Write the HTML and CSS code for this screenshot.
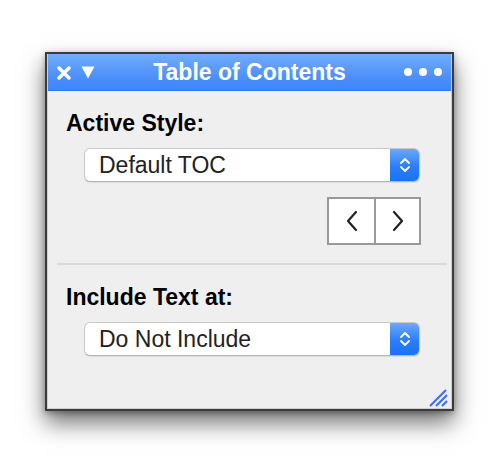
FILE: index.html
```html
<!DOCTYPE html>
<html lang="en">
<head>
  <meta charset="UTF-8">
  <title>Table of Contents</title>
  <link rel="stylesheet" href="styles.css">
</head>
<body>
  <div class="window">
    <div class="window-inner">
      <div class="titlebar">
        <div class="title-left">
          <svg class="close-icon" width="14" height="14" viewBox="0 0 14 14">
            <path d="M2 2 L12 12 M12 2 L2 12" stroke="#fff" stroke-width="3.4" stroke-linecap="round"/>
          </svg>
          <svg class="menu-icon" width="14" height="13" viewBox="0 0 14 13">
            <path d="M0.5 0.5 H13.5 L7 12.5 Z" fill="#fff"/>
          </svg>
        </div>
        <div class="title">Table of Contents</div>
        <div class="title-right">
          <span class="dot"></span><span class="dot"></span><span class="dot"></span>
        </div>
      </div>

      <div class="content">
        <div class="label">Active Style:</div>
        <div class="select">
          <span class="select-value">Default TOC</span>
          <span class="stepper">
            <svg width="12" height="18" viewBox="0 0 12 18">
              <path d="M2 7 L6 3 L10 7 M2 11 L6 15 L10 11" fill="none" stroke="#fff" stroke-width="1.8" stroke-linecap="round" stroke-linejoin="round"/>
            </svg>
          </span>
        </div>

        <div class="nav">
          <button class="nav-btn">
            <svg width="14" height="22" viewBox="0 0 14 22">
              <path d="M11 2 L3 11 L11 20" fill="none" stroke="#222" stroke-width="2.2" stroke-linecap="round" stroke-linejoin="round"/>
            </svg>
          </button>
          <button class="nav-btn">
            <svg width="14" height="22" viewBox="0 0 14 22">
              <path d="M3 2 L11 11 L3 20" fill="none" stroke="#222" stroke-width="2.2" stroke-linecap="round" stroke-linejoin="round"/>
            </svg>
          </button>
        </div>

        <div class="separator"></div>

        <div class="label">Include Text at:</div>
        <div class="select">
          <span class="select-value">Do Not Include</span>
          <span class="stepper">
            <svg width="12" height="18" viewBox="0 0 12 18">
              <path d="M2 7 L6 3 L10 7 M2 11 L6 15 L10 11" fill="none" stroke="#fff" stroke-width="1.8" stroke-linecap="round" stroke-linejoin="round"/>
            </svg>
          </span>
        </div>

        <div class="grip">
          <svg width="20" height="18" viewBox="0 0 20 18">
            <path d="M1 17 L17 1 M7 17 L18 6 M13 17 L18 12" stroke="#3b74f2" stroke-width="2.2"/>
          </svg>
        </div>
      </div>
    </div>
  </div>
</body>
</html>
```

FILE: styles.css
```css
body {
  margin: 0;
  padding: 52px 0 0 45px;
  min-height: 464px;
  box-sizing: border-box;
  background-color: #fff;
  font-family: 'Liberation Sans', Arial, sans-serif;
}

.window {
  box-sizing: border-box;
  width: 409px;
  height: 359px;
  border: 2px solid #3b3b3b;
  box-shadow: 0 12px 22px rgba(0, 0, 0, 0.55), 0 2px 6px rgba(0, 0, 0, 0.3);
}

.window-inner {
  box-sizing: border-box;
  height: 100%;
  border: 1px solid #cfcfcf;
  border-top: none;
  background-color: #efefef;
  display: flex;
  flex-direction: column;
}

.titlebar {
  height: 37px;
  box-sizing: border-box;
  display: flex;
  align-items: center;
  padding: 0 9px 0 9px;
  background: linear-gradient(#72acfb, #4a8dfb 70%, #3f86fb);
  border-bottom: 1px solid #2f78f4;
}

.title-left,
.title-right {
  width: 84px;
  display: flex;
  align-items: center;
}

.title-left {
  gap: 10px;
  padding-top: 1px;
}

.title-right {
  justify-content: flex-end;
  gap: 7px;
}

.dot {
  width: 8px;
  height: 8px;
  border-radius: 50%;
  background-color: #fff;
}

.title {
  flex: 1;
  text-align: center;
  color: #fff;
  font-weight: bold;
  font-size: 23px;
}

.content {
  flex: 1;
  display: flex;
  flex-direction: column;
  padding: 19px 0 0 0;
}

.label {
  font-weight: bold;
  font-size: 23px;
  line-height: 26px;
  color: #000;
  padding-left: 18px;
}

.select {
  box-sizing: border-box;
  width: 336px;
  height: 34px;
  margin: 12px 0 0 36px;
  display: flex;
  background-color: #fff;
  border: 1px solid #c9c9c9;
  border-bottom-color: #b5b5b5;
  border-radius: 6px;
  box-shadow: 0 1px 1px rgba(0, 0, 0, 0.08);
  overflow: hidden;
}

.select-value {
  flex: 1;
  padding-left: 14px;
  font-size: 23px;
  line-height: 33px;
  color: #222;
}

.stepper {
  width: 29px;
  display: flex;
  align-items: center;
  justify-content: center;
  background: linear-gradient(#6aa8fb, #2b7ef8 55%, #1b72f6);
}

.nav {
  display: flex;
  align-self: flex-start;
  margin: 15px 0 0 279px;
  border: 2px solid #999;
  background-color: #fff;
}

.nav-btn {
  width: 45px;
  height: 44px;
  padding: 0;
  border: none;
  background-color: #fff;
  display: flex;
  align-items: center;
  justify-content: center;
}

.nav-btn + .nav-btn {
  border-left: 2px solid #999;
}

.separator {
  height: 2px;
  margin: 18px 4px 0 9px;
  background-color: #d9d9d9;
}

.content .separator + .label {
  margin-top: 19px;
}

.grip {
  margin-top: auto;
  align-self: flex-end;
  height: 18px;
  padding: 0 2px 1px 0;
}
```
